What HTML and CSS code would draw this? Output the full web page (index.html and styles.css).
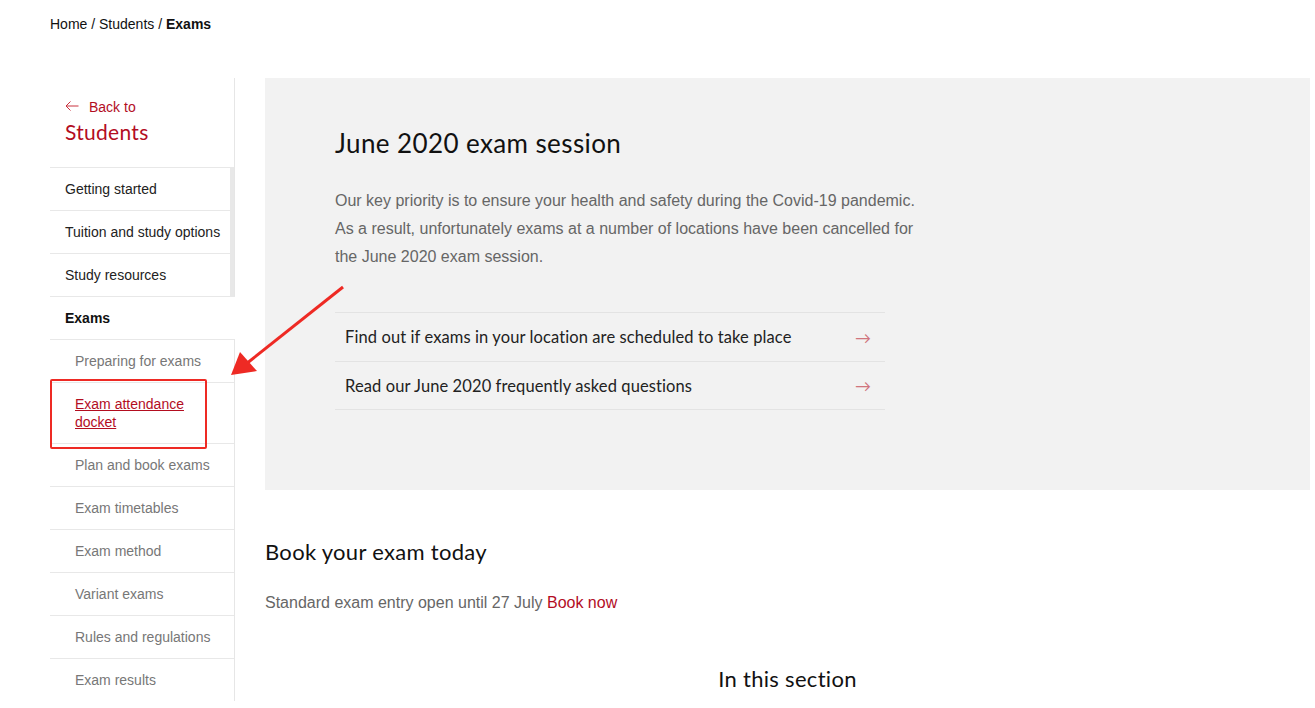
FILE: index.html
```html
<!DOCTYPE html>
<html lang="en">
<head>
  <meta charset="UTF-8">
  <title>Exams</title>
  <link rel="stylesheet" href="styles.css">
</head>
<body>
  <div class="crumbs">
    <a href="#">Home</a> / <a href="#">Students</a> / <b>Exams</b>
  </div>
  <div class="page">
    <div class="side">
      <div class="back">
        <a class="back-to" href="#">
          <svg class="larr" width="14" height="10" viewBox="0 0 14 10"><path d="M13.5 5H1M5.5 0.5L1 5l4.5 4.5" fill="none" stroke="#c9323f" stroke-width="1"/></svg>Back to</a>
        <div class="back-title">Students</div>
      </div>
      <ul class="nav-top">
        <li>Getting started</li>
        <li>Tuition and study options</li>
        <li>Study resources</li>
      </ul>
      <div class="nav-current">Exams</div>
      <ul class="nav-sub">
        <li>Preparing for exams</li>
        <li class="active"><a href="#">Exam attendance docket</a></li>
        <li>Plan and book exams</li>
        <li>Exam timetables</li>
        <li>Exam method</li>
        <li>Variant exams</li>
        <li>Rules and regulations</li>
        <li>Exam results</li>
      </ul>
    </div>
    <div class="main">
      <div class="panel">
        <h1>June 2020 exam session</h1>
        <p>Our key priority is to ensure your health and safety during the Covid-19 pandemic. As a result, unfortunately exams at a number of locations have been cancelled for the June 2020 exam session.</p>
        <ul class="links">
          <li><span>Find out if exams in your location are scheduled to take place</span><span class="rarr">&rarr;</span></li>
          <li><span>Read our June 2020 frequently asked questions</span><span class="rarr">&rarr;</span></li>
        </ul>
      </div>
      <h2>Book your exam today</h2>
      <p class="entry">Standard exam entry open until 27 July <a href="#">Book now</a></p>
      <h2 class="section">In this section</h2>
    </div>
  </div>
  <div class="mark-box"></div>
  <svg class="mark-arrow" width="130" height="110" viewBox="0 0 130 110">
    <line x1="115" y1="7" x2="18" y2="84" stroke="#ee2a24" stroke-width="3"/>
    <polygon points="3,95 12,72 29,91" fill="#ee2a24"/>
  </svg>
</body>
</html>
```
FILE: styles.css
```css
body {
  margin: 0;
  font-family: 'Liberation Sans', Arial, sans-serif;
  color: #222;
  background: #fff;
}
a {
  color: inherit;
  text-decoration: none;
}
.crumbs {
  padding: 16px 0 0 50px;
  height: 78px;
  box-sizing: border-box;
  font-size: 14px;
  color: #111;
}
.page {
  display: flex;
  gap: 30px;
  padding-left: 50px;
  margin-right: 5px;
}
.side {
  width: 185px;
  flex-shrink: 0;
}
.back {
  height: 89px;
  box-sizing: border-box;
  padding: 21px 0 0 15px;
  border-right: 1px solid #e6e6e6;
}
.back-to {
  display: flex;
  align-items: center;
  color: #b30d1f;
  font-size: 14px;
}
.larr {
  margin-right: 10px;
  margin-top: -2px;
}
.back-title {
  margin-top: 4px;
  font-family: Lato, sans-serif;
  font-size: 21px;
  letter-spacing: 0.3px;
  color: #b30d1f;
}
ul {
  list-style: none;
  margin: 0;
  padding: 0;
}
.nav-top {
  border-right: 1px solid #e6e6e6;
}
.nav-top li {
  height: 43px;
  line-height: 42px;
  padding-left: 15px;
  border-top: 1px solid #e8e8e8;
  border-right: 4px solid #e8e8e8;
  box-sizing: border-box;
  font-size: 14px;
  color: #222;
}
.nav-current {
  height: 43px;
  line-height: 42px;
  padding-left: 15px;
  border-top: 1px solid #e8e8e8;
  box-sizing: border-box;
  font-size: 14px;
  font-weight: bold;
  color: #111;
}
.nav-sub {
  border-right: 1px solid #e6e6e6;
}
.nav-sub li {
  padding: 12px 15px 12px 25px;
  border-top: 1px solid #e8e8e8;
  font-size: 14px;
  line-height: 18px;
  color: #777;
}
.nav-sub li.active {
  padding-right: 40px;
}
.nav-sub li.active a {
  color: #b30d1f;
  text-decoration: underline;
}
.main {
  flex: 1;
}
.panel {
  background: #f2f2f2;
  padding: 50px 70px 80px 70px;
  height: 412px;
  box-sizing: border-box;
}
h1 {
  margin: 0;
  font-family: Lato, sans-serif;
  font-weight: normal;
  font-size: 26px;
  letter-spacing: 0.4px;
  line-height: 30px;
  color: #111;
}
.panel p {
  margin: 29px 0 0 0;
  width: 585px;
  font-size: 16px;
  line-height: 28px;
  color: #666;
}
.links {
  margin-top: 41px;
  width: 550px;
}
.links li {
  display: flex;
  justify-content: space-between;
  align-items: center;
  height: 49px;
  padding: 0 14px 0 10px;
  border-top: 1px solid #e3e3e3;
  box-sizing: border-box;
  font-family: Lato, sans-serif;
  font-size: 16.5px;
  letter-spacing: 0.1px;
  color: #222;
}
.links li:last-child {
  border-bottom: 1px solid #e3e3e3;
}
.rarr {
  color: #d0757d;
  font-size: 16px;
}
h2 {
  margin: 49px 0 0 0;
  font-family: Lato, sans-serif;
  font-weight: normal;
  font-size: 22px;
  letter-spacing: 0.3px;
  line-height: 26px;
  color: #111;
}
.entry {
  margin: 29px 0 0 0;
  font-size: 16px;
  color: #666;
}
.entry a {
  color: #b30d1f;
}
h2.section {
  margin-top: 54px;
  text-align: center;
}
.mark-box {
  position: absolute;
  left: 50px;
  top: 379px;
  width: 157px;
  height: 70px;
  box-sizing: border-box;
  border: 2px solid #ee2a24;
  border-radius: 2px;
}
.mark-arrow {
  position: absolute;
  left: 228px;
  top: 280px;
}
```
